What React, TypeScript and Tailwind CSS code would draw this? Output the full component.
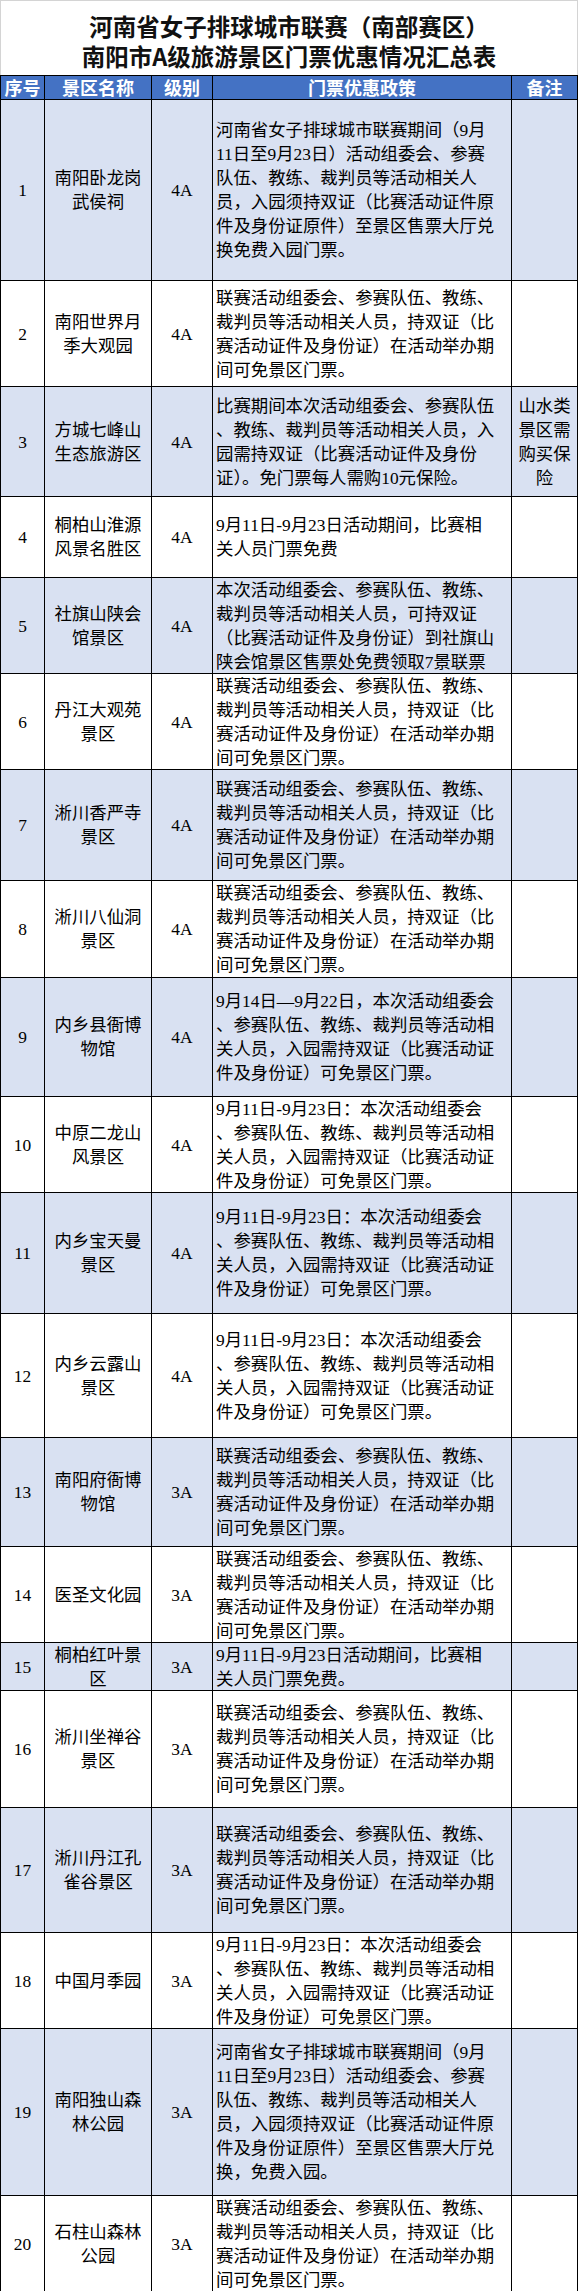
type Row = {
  no: number;
  name: string[];
  level: string;
  policy: string[];
  note?: string[];
  h: string;
};

const policyA = [
  "联赛活动组委会、参赛队伍、教练、",
  "裁判员等活动相关人员，持双证（比",
  "赛活动证件及身份证）在活动举办期",
  "间可免景区门票。",
];

const policyB = [
  "9月11日-9月23日：本次活动组委会",
  "、参赛队伍、教练、裁判员等活动相",
  "关人员，入园需持双证（比赛活动证",
  "件及身份证）可免景区门票。",
];

const rows: Row[] = [
  {
    no: 1,
    name: ["南阳卧龙岗", "武侯祠"],
    level: "4A",
    policy: [
      "河南省女子排球城市联赛期间（9月",
      "11日至9月23日）活动组委会、参赛",
      "队伍、教练、裁判员等活动相关人",
      "员，入园须持双证（比赛活动证件原",
      "件及身份证原件）至景区售票大厅兑",
      "换免费入园门票。",
    ],
    h: "h-[181px]",
  },
  { no: 2, name: ["南阳世界月", "季大观园"], level: "4A", policy: policyA, h: "h-[106px]" },
  {
    no: 3,
    name: ["方城七峰山", "生态旅游区"],
    level: "4A",
    policy: [
      "比赛期间本次活动组委会、参赛队伍",
      "、教练、裁判员等活动相关人员，入",
      "园需持双证（比赛活动证件及身份",
      "证）。免门票每人需购10元保险。",
    ],
    note: ["山水类", "景区需", "购买保", "险"],
    h: "h-[110px]",
  },
  {
    no: 4,
    name: ["桐柏山淮源", "风景名胜区"],
    level: "4A",
    policy: ["9月11日-9月23日活动期间，比赛相", "关人员门票免费"],
    h: "h-[81px]",
  },
  {
    no: 5,
    name: ["社旗山陕会", "馆景区"],
    level: "4A",
    policy: [
      "本次活动组委会、参赛队伍、教练、",
      "裁判员等活动相关人员，可持双证",
      "（比赛活动证件及身份证）到社旗山",
      "陕会馆景区售票处免费领取7景联票",
    ],
    h: "h-[96px]",
  },
  { no: 6, name: ["丹江大观苑", "景区"], level: "4A", policy: policyA, h: "h-[96px]" },
  { no: 7, name: ["淅川香严寺", "景区"], level: "4A", policy: policyA, h: "h-[111px]" },
  { no: 8, name: ["淅川八仙洞", "景区"], level: "4A", policy: policyA, h: "h-[97px]" },
  {
    no: 9,
    name: ["内乡县衙博", "物馆"],
    level: "4A",
    policy: [
      "9月14日—9月22日，本次活动组委会",
      "、参赛队伍、教练、裁判员等活动相",
      "关人员，入园需持双证（比赛活动证",
      "件及身份证）可免景区门票。",
    ],
    h: "h-[119px]",
  },
  { no: 10, name: ["中原二龙山", "风景区"], level: "4A", policy: policyB, h: "h-[96px]" },
  { no: 11, name: ["内乡宝天曼", "景区"], level: "4A", policy: policyB, h: "h-[121px]" },
  { no: 12, name: ["内乡云露山", "景区"], level: "4A", policy: policyB, h: "h-[124px]" },
  { no: 13, name: ["南阳府衙博", "物馆"], level: "3A", policy: policyA, h: "h-[109px]" },
  { no: 14, name: ["医圣文化园"], level: "3A", policy: policyA, h: "h-[96px]" },
  {
    no: 15,
    name: ["桐柏红叶景", "区"],
    level: "3A",
    policy: ["9月11日-9月23日活动期间，比赛相", "关人员门票免费。"],
    h: "h-[48px]",
  },
  { no: 16, name: ["淅川坐禅谷", "景区"], level: "3A", policy: policyA, h: "h-[117px]" },
  { no: 17, name: ["淅川丹江孔", "雀谷景区"], level: "3A", policy: policyA, h: "h-[125px]" },
  { no: 18, name: ["中国月季园"], level: "3A", policy: policyB, h: "h-[96px]" },
  {
    no: 19,
    name: ["南阳独山森", "林公园"],
    level: "3A",
    policy: [
      "河南省女子排球城市联赛期间（9月",
      "11日至9月23日）活动组委会、参赛",
      "队伍、教练、裁判员等活动相关人",
      "员，入园须持双证（比赛活动证件原",
      "件及身份证原件）至景区售票大厅兑",
      "换，免费入园。",
    ],
    h: "h-[167px]",
  },
  { no: 20, name: ["石柱山森林", "公园"], level: "3A", policy: policyA, h: "h-[96px]" },
];

const cols = "grid grid-cols-[44px_107px_61px_299px_66px]";
const cell = "flex flex-col justify-center border-r border-black";

function Lines({ lines }: { lines: string[] }) {
  return (
    <>
      {lines.map((l, i) => (
        <span key={i} className="block whitespace-nowrap">
          {l}
        </span>
      ))}
    </>
  );
}

export default function App() {
  return (
    <div className="w-[578px] bg-white text-black font-['Liberation_Serif','Noto_Sans_CJK_SC',serif]">
      <div className="h-[75px] pt-[10px] border-t border-x border-[#d4d4d4] text-center font-['Noto_Sans_CJK_SC',sans-serif] font-bold text-[23.5px] leading-[30px] text-[#111]">
        <div>河南省女子排球城市联赛（南部赛区）</div>
        <div>南阳市A级旅游景区门票优惠情况汇总表</div>
      </div>

      <div className={`${cols} h-[25px] border-y border-l border-black bg-[#4472c4] text-white font-['Noto_Sans_CJK_SC',sans-serif] font-bold text-[18px] leading-[23px] text-center`}>
        <div className={`${cell} items-center`}>序号</div>
        <div className={`${cell} items-center`}>景区名称</div>
        <div className={`${cell} items-center`}>级别</div>
        <div className={`${cell} items-center`}>门票优惠政策</div>
        <div className={`${cell} items-center`}>备注</div>
      </div>

      {rows.map((r, i) => (
        <div
          key={r.no}
          className={`${cols} ${r.h} border-b border-l border-black text-[17.4px] leading-[24px] ${
            i % 2 === 0 ? "bg-[#d9e1f2]" : "bg-white"
          }`}
        >
          <div className={`${cell} items-center`}>{r.no}</div>
          <div className={`${cell} items-center text-center`}>
            <Lines lines={r.name} />
          </div>
          <div className={`${cell} items-center`}>{r.level}</div>
          <div className={`${cell} pl-[3px]`}>
            <Lines lines={r.policy} />
          </div>
          <div className={`${cell} items-center text-center`}>
            {r.note && <Lines lines={r.note} />}
          </div>
        </div>
      ))}
    </div>
  );
}
